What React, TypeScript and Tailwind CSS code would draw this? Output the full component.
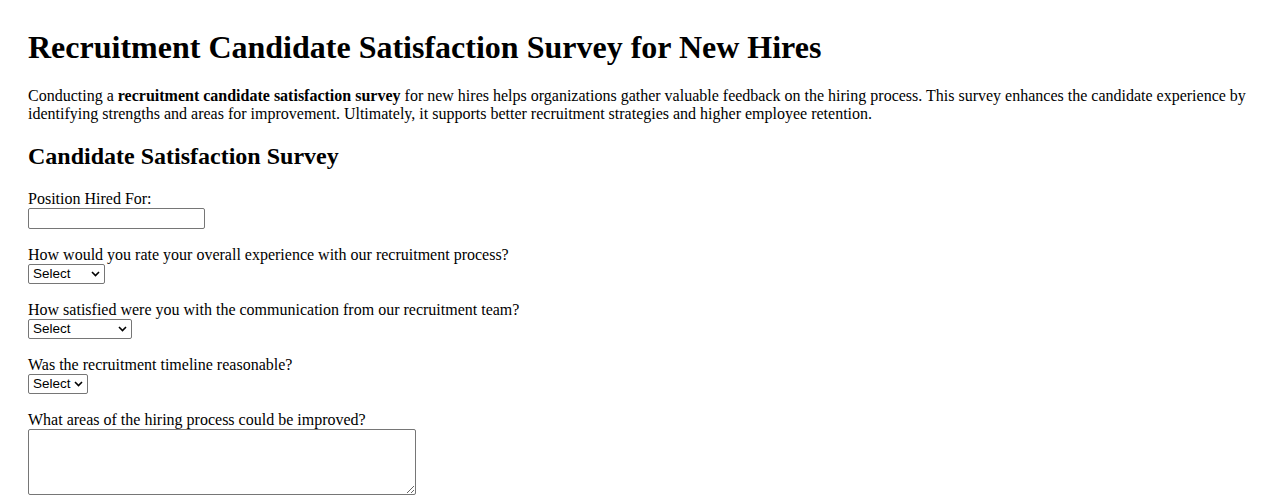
const Chevron = () => (
  <svg
    className="pointer-events-none absolute right-[5px] top-1/2 -translate-y-1/2"
    width="9"
    height="6"
    viewBox="0 0 9 6"
    fill="none"
  >
    <path d="M1 1l3.5 3.5L8 1" stroke="#000" strokeWidth="1.6" />
  </svg>
);

const SelectBox = ({ width }: { width: string }) => (
  <span className={`relative inline-block ${width}`}>
    <select className="block h-[20px] w-full appearance-none rounded-[2px] border border-[#767676] bg-white pl-[4px] font-['Liberation_Sans',Arial,sans-serif] text-[13.5px] leading-[18px] text-black">
      <option>Select</option>
    </select>
    <Chevron />
  </span>
);

export default function App() {
  return (
    <div className="min-h-screen bg-white px-[28px] pt-[29px] font-['Liberation_Serif','Times_New_Roman',serif] text-black">
      <h1 className="mb-[21px] text-[32px] font-bold leading-[37px]">
        Recruitment Candidate Satisfaction Survey for New Hires
      </h1>
      <p className="mb-[19px] text-base leading-[18px]">
        Conducting a <strong>recruitment candidate satisfaction survey</strong> for new hires helps organizations
        gather valuable feedback on the hiring process. This survey enhances the candidate experience by
        identifying strengths and areas for improvement. Ultimately, it supports better recruitment strategies and
        higher employee retention.
      </p>
      <h2 className="mb-[20px] text-2xl font-bold leading-[28px]">Candidate Satisfaction Survey</h2>

      <form className="flex flex-col gap-[17px] text-base leading-[18px]">
        <div className="flex flex-col items-start">
          <label>Position Hired For:</label>
          <input
            type="text"
            className="h-[21px] w-[177px] rounded-[2px] border border-[#767676] bg-white px-[2px] font-['Liberation_Sans',Arial,sans-serif] text-[13.33px]"
          />
        </div>
        <div className="flex flex-col items-start">
          <label>How would you rate your overall experience with our recruitment process?</label>
          <SelectBox width="w-[77px]" />
        </div>
        <div className="flex flex-col items-start">
          <label>How satisfied were you with the communication from our recruitment team?</label>
          <SelectBox width="w-[104px]" />
        </div>
        <div className="flex flex-col items-start">
          <label>Was the recruitment timeline reasonable?</label>
          <SelectBox width="w-[60px]" />
        </div>
        <div className="flex flex-col items-start">
          <label>What areas of the hiring process could be improved?</label>
          <textarea className="h-[66px] w-[388px] rounded-[2px] border border-[#767676] bg-white font-['Liberation_Mono',monospace] text-[13.33px]" />
        </div>
      </form>
    </div>
  );
}
